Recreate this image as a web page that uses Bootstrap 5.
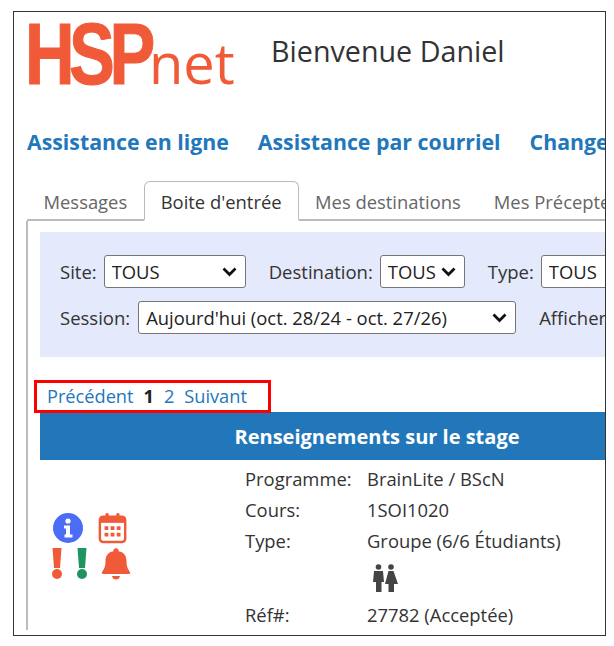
<!DOCTYPE html>
<html lang="fr">
<head>
  <meta charset="UTF-8">
  <title>HSPnet</title>
  <link href="https://cdn.jsdelivr.net/npm/bootstrap@5.3.0/dist/css/bootstrap.min.css" rel="stylesheet">
  <style>
    body {
      background-color: #fff;
      font-family: "Open Sans", sans-serif;
      color: #333;
      font-size: 18.4px;
    }

    .shot-frame {
      width: 593px;
      height: 625px;
      margin: 11px 0 0 13px;
      border: 1px solid #333;
      overflow: hidden;
      white-space: nowrap;
    }

    .head-row {
      height: 84px;
      padding: 11px 0 0 15px;
    }

    .logo-box {
      width: 242px;
      line-height: 62px;
      color: #f15a38;
      flex: none;
    }

    .logo-caps {
      display: inline-block;
      width: 124px;
      margin-left: -4px;
      font-family: "Liberation Sans", sans-serif;
      font-weight: 700;
      font-size: 87px;
      letter-spacing: -7px;
      -webkit-text-stroke: 1px #f15a38;
      transform: scaleX(.79);
      transform-origin: left center;
    }

    .logo-low {
      font-size: 56px;
      font-weight: 400;
    }

    .welcome {
      font-size: 28.7px;
      line-height: 36px;
      margin: 10px 0 0 0;
      font-weight: 400;
    }

    .top-links {
      margin-top: 30px;
      padding-left: 13px;
      gap: 29px;
      height: 32px;
      line-height: 32px;
    }

    .top-links a {
      color: #2277bb;
      font-weight: 700;
      font-size: 21.3px;
      text-decoration: none;
    }

    .tabs-box {
      margin: 23px 0 0 13px;
      width: 700px;
      border-bottom: 2px solid #bbb;
      height: 40px;
      flex-wrap: nowrap;
    }

    .tabs-box .nav-link {
      color: #666;
      font-size: 18.4px;
      padding: 8px 16.5px 4px;
      line-height: 26px;
      height: 40px;
      border: 0;
      border-radius: 6px 6px 0 0;
    }

    .tabs-box .nav-link.active {
      color: #333;
      border: 1px solid #bbb;
      border-bottom: 2px solid #fff;
      background: #fff;
      padding: 7px 16px 3px;
    }

    .tab-panel {
      margin-left: 12px;
      border-left: 2px solid #bbb;
      padding: 11px 0 0 12px;
    }

    .filter-box {
      background-color: #e4e9fb;
      height: 125px;
      width: 700px;
      padding: 23px 0 0 20px;
      font-size: 18.5px;
    }

    .filter-line {
      height: 33px;
      margin-bottom: 13px;
    }

    .filter-line select {
      appearance: none;
      height: 33px;
      font-family: "Open Sans", sans-serif;
      font-size: 18.4px;
      color: #222;
      background: #fff url("data:image/svg+xml,%3Csvg xmlns='http://www.w3.org/2000/svg' viewBox='0 0 15 10'%3E%3Cpath d='M1.500 1.500l6 6 6-6' fill='none' stroke='%23111' stroke-width='2.800'/%3E%3C/svg%3E") no-repeat right 8px center / 15px 10px;
      border: 1px solid #767676;
      border-radius: 3px;
      margin-left: 7px;
      padding: 1px 6px 0 7px;
    }

    .sel-site { width: 142px; margin-right: 23px; }
    .sel-dest { width: 85px; margin-right: 23px; }
    .sel-type { width: 160px; }
    .filter-line .sel-session { width: 378px; margin: 0 23px 0 8px; }

    .pager-box {
      margin: 23px 0 0 -6px;
      width: 237px;
      height: 33px;
      border: 3px solid #f00;
      padding-left: 10px;
      line-height: 27px;
      position: relative;
      font-size: 18.200px;
    }

    .pager-box a {
      color: #2277bb;
      text-decoration: none;
      margin-right: 10px;
    }

    .pager-box b {
      color: #222;
      margin-right: 10px;
    }

    .stage-bar {
      background-color: #2277bb;
      color: #fff;
      font-weight: 700;
      font-size: 20px;
      width: 674px;
      height: 48px;
      line-height: 50px;
      margin-top: -1px;
    }

    .stage-body {
      padding-top: 3px;
    }

    .icons-col {
      width: 205px;
      flex: none;
      padding: 49px 0 0 10px;
    }

    .icons-line {
      height: 36px;
      align-items: flex-start;
    }

    .ic-info { margin: 1px 15px 0 3px; }
    .ic-mark-next { margin-left: 11px; }
    .ic-bell { margin-left: 12px; }

    .info-table {
      display: grid;
      grid-template-columns: 122px auto;
    }

    .info-table div {
      height: 31px;
      line-height: 31px;
    }

    .info-table .icon-cell {
      height: 43px;
      padding: 8px 0 0 5px;
      line-height: 1;
    }
  </style>
</head>
<body>

  <div class="shot-frame">
    <!-- Header -->
    <div class="head-row d-flex">
      <div class="logo-box"><span class="logo-caps">HSP</span><span class="logo-low">net</span></div>
      <h1 class="welcome">Bienvenue Daniel</h1>
    </div>

    <div class="top-links d-flex">
      <a href="#">Assistance en ligne</a>
      <a href="#">Assistance par courriel</a>
      <a href="#">Changer le mot de passe</a>
    </div>

    <!-- Tabs -->
    <ul class="nav nav-tabs tabs-box">
      <li class="nav-item"><a class="nav-link" href="#">Messages</a></li>
      <li class="nav-item"><a class="nav-link active" href="#">Boite d'entrée</a></li>
      <li class="nav-item"><a class="nav-link" href="#">Mes destinations</a></li>
      <li class="nav-item"><a class="nav-link" href="#">Mes Précepteurs</a></li>
    </ul>

    <div class="tab-panel">
      <div class="filter-box">
        <div class="filter-line d-flex align-items-center">
          <label>Site:</label>
          <select class="sel-site"><option>TOUS</option></select>
          <label>Destination:</label>
          <select class="sel-dest"><option>TOUS</option></select>
          <label>Type:</label>
          <select class="sel-type"><option>TOUS</option></select>
        </div>
        <div class="filter-line d-flex align-items-center">
          <label>Session:</label>
          <select class="sel-session"><option>Aujourd'hui (oct. 28/24 - oct. 27/26)</option></select>
          <label>Afficher</label>
        </div>
      </div>

      <div class="pager-box">
        <a href="#">Précédent</a><b>1</b><a href="#">2</a><a href="#">Suivant</a>
      </div>

      <div class="stage-bar text-center">Renseignements sur le stage</div>

      <div class="stage-body d-flex">
        <div class="icons-col">
          <div class="icons-line d-flex">
            <!-- info -->
            <svg class="ic-info" width="30" height="30" viewBox="0 0 30 30">
              <circle cx="15" cy="15" r="15" fill="#4a6cf7"/>
              <circle cx="15" cy="8" r="2.600" fill="#fff"/>
              <path d="M11 12.500h6v9h2.500v3h-8v-3H13v-6h-2z" fill="#fff"/>
            </svg>
            <!-- calendar -->
            <svg width="30" height="32" viewBox="0 0 32 32">
              <rect x="2" y="4" width="27" height="27" rx="3.500" fill="none" stroke="#f15a38" stroke-width="2.600"/>
              <rect x="2" y="4" width="27" height="6.500" fill="#f15a38"/>
              <rect x="8" y="0" width="3.400" height="7" rx="1.500" fill="#f15a38"/>
              <rect x="19.500" y="0" width="3.400" height="7" rx="1.500" fill="#f15a38"/>
              <path d="M7 14h4v4H7zM13.500 14h4v4h-4zM20 14h4v4h-4zM7 21h4v4H7zM13.500 21h4v4h-4zM20 21h4v4h-4z" fill="#f15a38"/>
            </svg>
          </div>
          <div class="icons-line d-flex">
            <svg width="14" height="32" viewBox="0 0 14 32">
              <path d="M2.500 0h9l-1.500 20H4z" fill="#f15a38"/>
              <circle cx="7" cy="26" r="5" fill="#f15a38"/>
            </svg>
            <svg class="ic-mark-next" width="14" height="32" viewBox="0 0 14 32">
              <path d="M2.500 0h9l-1.500 20H4z" fill="#1f9460"/>
              <circle cx="7" cy="26" r="5" fill="#1f9460"/>
            </svg>
            <svg class="ic-bell" width="30" height="32" viewBox="0 0 30 32">
              <circle cx="15" cy="2.800" r="2.600" fill="#f15a38"/>
              <path d="M15 3c7 0 10.500 4 10.500 10 0 6 1.500 8 3.500 11 .6 1-.2 2-1.300 2H2.300c-1.100 0-1.900-1-1.300-2C3 21 4.500 19 4.500 13 4.500 7 8 3 15 3z" fill="#f15a38"/>
              <path d="M11 28h8c-.4 2.400-2 3.500-4 3.500s-3.600-1.100-4-3.500z" fill="#f15a38"/>
            </svg>
          </div>
        </div>

        <div class="info-table">
          <div>Programme:</div><div>BrainLite / BScN</div>
          <div>Cours:</div><div>1SOI1020</div>
          <div>Type:</div><div>Groupe (6/6 Étudiants)</div>
          <div class="icon-cell"></div>
          <div class="icon-cell">
            <svg width="26" height="28" viewBox="0 0 26 28">
              <circle cx="6.500" cy="3" r="2.800" fill="#444"/>
              <circle cx="19" cy="3" r="2.800" fill="#444"/>
              <path d="M2 7h9l1 11H9.500v10H4V18H1z" fill="#444"/>
              <path d="M16.500 7h5L26 20h-4v8h-5.500v-8H13z" fill="#444"/>
            </svg>
          </div>
          <div>Réf#:</div><div>27782 (Acceptée)</div>
        </div>
      </div>
    </div>
  </div>

  <script src="https://cdn.jsdelivr.net/npm/bootstrap@5.3.0/dist/js/bootstrap.bundle.min.js"></script>
</body>
</html>
